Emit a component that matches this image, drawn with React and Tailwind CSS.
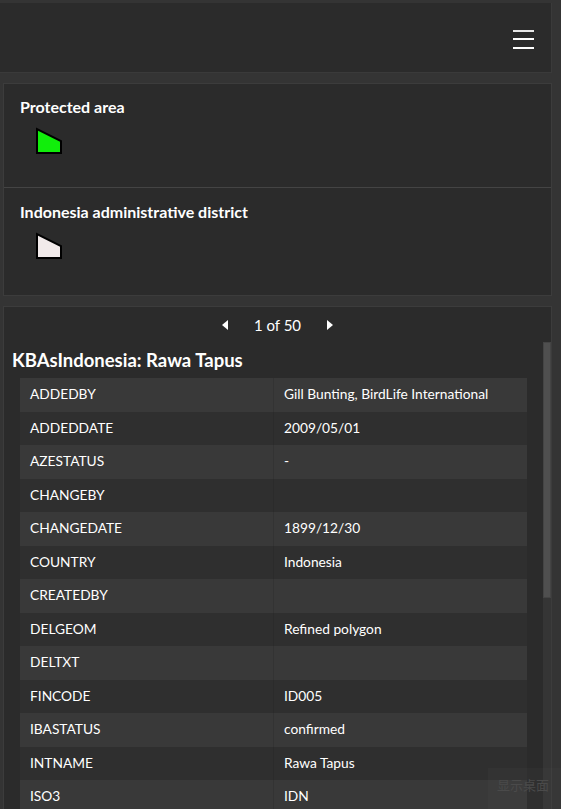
import React from "react";

const rows = [
  ["ADDEDBY", "Gill Bunting, BirdLife International"],
  ["ADDEDDATE", "2009/05/01"],
  ["AZESTATUS", "-"],
  ["CHANGEBY", ""],
  ["CHANGEDATE", "1899/12/30"],
  ["COUNTRY", "Indonesia"],
  ["CREATEDBY", ""],
  ["DELGEOM", "Refined polygon"],
  ["DELTXT", ""],
  ["FINCODE", "ID005"],
  ["IBASTATUS", "confirmed"],
  ["INTNAME", "Rawa Tapus"],
  ["ISO3", "IDN"],
  ["NATNAME", "Rawa Tapus"],
  ["REGION", "Asia"],
];

function Swatch({ fill }) {
  return (
    <svg width="28" height="28" viewBox="0 0 28 28" className="block">
      <path
        d="M2 2 L2 26 L26 26 L26 14 Z"
        fill={fill}
        stroke="#000"
        strokeWidth="2"
        strokeLinejoin="miter"
      />
    </svg>
  );
}

export default function App() {
  return (
    <div
      className="relative w-[561px] h-[809px] bg-[#343434] overflow-hidden text-white"
      style={{ fontFamily: "Lato, 'Open Sans', sans-serif" }}
    >
      {/* header */}
      <div className="mt-[3px] w-[552px] h-[70px] bg-[#2b2b2b] border-r border-b border-[#3a3a3a] flex items-center justify-end pr-[17px]">
        <div className="flex flex-col gap-[6.5px] w-[21px] mt-[3px]">
          <div className="h-[2px] bg-[#e8e8e8]" />
          <div className="h-[2px] bg-white" />
          <div className="h-[2px] bg-white" />
        </div>
      </div>

      {/* legend */}
      <div className="mt-[10px] ml-[3px] w-[549px] bg-[#2b2b2b] border border-[#3c3c3c]">
        <div className="h-[104px] border-b border-[#444] pl-[16px] pt-[13px]">
          <div className="text-[16px] font-bold leading-[20px]">Protected area</div>
          <div className="mt-[10px] ml-[15px]">
            <Swatch fill="#11ee0b" />
          </div>
        </div>
        <div className="h-[107px] pl-[16px] pt-[14px]">
          <div className="text-[16px] font-bold leading-[20px]">
            Indonesia administrative district
          </div>
          <div className="mt-[10px] ml-[15px]">
            <Swatch fill="#f1eaea" />
          </div>
        </div>
      </div>

      {/* popup */}
      <div className="mt-[10px] ml-[3px] w-[549px] h-[520px] bg-[#2b2b2b] border border-[#3c3c3c] flex flex-col">
        <div className="h-[35px] flex items-center justify-center gap-[23px] pt-[1px]">
          <svg width="8" height="12" viewBox="0 0 8 12">
            <path d="M7 1 L1 6 L7 11 Z" fill="#fff" />
          </svg>
          <span className="text-[15px] leading-[20px] px-[2px]">1 of 50</span>
          <svg width="8" height="12" viewBox="0 0 8 12">
            <path d="M1 1 L7 6 L1 11 Z" fill="#fff" />
          </svg>
        </div>
        <div className="flex flex-1 min-h-0">
          <div className="flex-1 min-w-0">
            <div className="pl-[8px] pt-[7px] text-[18.5px] font-bold leading-[22px]">
              KBAsIndonesia: Rawa Tapus
            </div>
            <div className="mt-[7px] ml-[16px] mr-[16px]">
              {rows.map(([k, v], i) => (
                <div
                  key={k}
                  className={
                    "flex h-[33.5px] items-center text-[13.75px] " +
                    (i % 2 === 0 ? "bg-[#393939]" : "bg-[#2f2f2f]")
                  }
                >
                  <div
                    className={
                      "w-[254px] h-full flex items-center pl-[10px] border-r " +
                      (i % 2 === 0 ? "border-[#333]" : "border-[#2b2b2b]")
                    }
                  >
                    {k}
                  </div>
                  <div className="flex-1 pl-[10px]">{v}</div>
                </div>
              ))}
            </div>
          </div>
          <div className="w-[8px] bg-[#353535] flex flex-col">
            <div className="h-[256px] bg-[#4f4f4f] border border-[#444]" />
          </div>
        </div>
      </div>

      {/* faint desktop tooltip watermark */}
      <div
        className="absolute left-[488px] top-[768px] w-[73px] h-[41px] bg-[#ffffff05] flex items-start justify-start pl-[9px] pt-[10px] text-[13px] leading-[14px] text-[#4a4a4a]"
        style={{ fontFamily: "'Noto Sans CJK SC', sans-serif" }}
      >
        显示桌面
      </div>
    </div>
  );
}
